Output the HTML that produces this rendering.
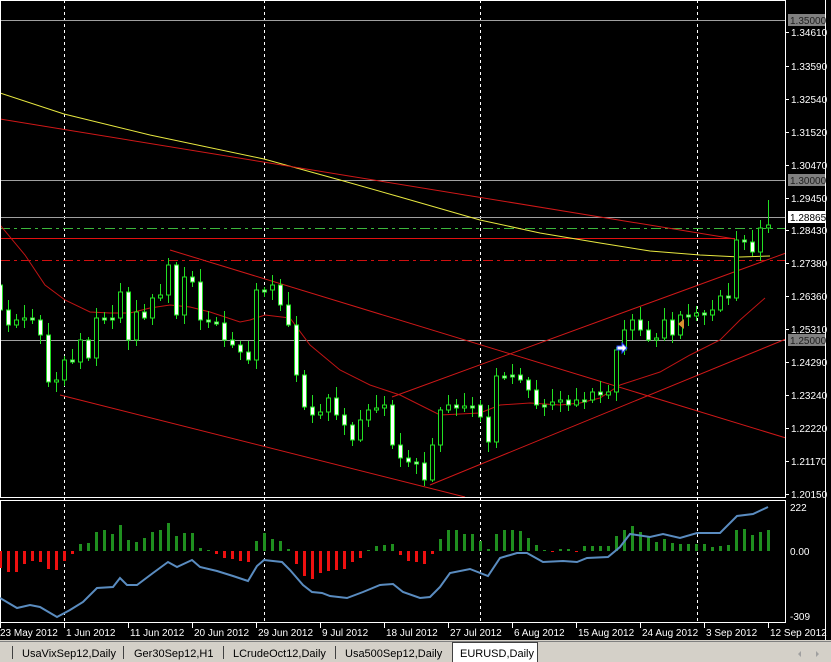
<!DOCTYPE html>
<html><head><meta charset="utf-8"><style>
html,body{margin:0;padding:0;background:#000;width:831px;height:662px;overflow:hidden;font-family:"Liberation Sans",sans-serif;}
svg{display:block}
</style></head><body>
<svg id="s" width="831" height="662" xmlns="http://www.w3.org/2000/svg" font-family="Liberation Sans, sans-serif" font-size="10">
<rect width="831" height="662" fill="#000"/>
<g id="grid"></g>
<line x1="0" y1="20.5" x2="786" y2="20.5" stroke="#a0a0a0"/>
<line x1="0" y1="180.5" x2="786" y2="180.5" stroke="#a0a0a0"/>
<line x1="0" y1="217.5" x2="786" y2="217.5" stroke="#a0a0a0"/>
<line x1="0" y1="340.5" x2="786" y2="340.5" stroke="#a0a0a0"/>
<line x1="0" y1="228.5" x2="786" y2="228.5" stroke="#3cb83c" stroke-dasharray="10,4,3,4"/>
<line x1="0" y1="238.5" x2="735" y2="238.5" stroke="#e01010"/>
<line x1="0" y1="260.5" x2="786" y2="260.5" stroke="#d01010" stroke-dasharray="10,4,3,4"/>
<polyline fill="none" stroke="#e8e840" points="0,93 64,114 150,135 264,159 340,180 400,197 480,220 540,233 600,243 650,251 700,255 740,257 770,256"/>
<line x1="0" y1="119" x2="735" y2="239" stroke="#d01818"/>
<line x1="170" y1="250" x2="786" y2="438" stroke="#d01818"/>
<line x1="60" y1="395" x2="465" y2="497" stroke="#d01818"/>
<line x1="392" y1="397" x2="786" y2="253" stroke="#d01818"/>
<line x1="430" y1="485" x2="786" y2="339" stroke="#d01818"/>
<polyline fill="none" stroke="#c01414" points="0,225 25,255 45,285 65,300 90,312 110,313 130,313 150,308 170,305 190,307 210,312 240,322 250,320 265,315 290,318 310,345 340,370 370,385 400,395 430,410 440,415 460,414 480,413 500,405 530,403 560,405 580,403 600,398 620,385 660,372 690,355 720,340 740,320 765,298"/>
<g id="candles"></g>
<path d="M617,346 l5,0 0,-3 5,5 -5,5 0,-3 -5,0z" fill="#fff" stroke="#2040ff"/>
<path d="M678,324 l6,-5 0,10z" fill="#d89030"/>
<rect x="0.5" y="0.5" width="785" height="497" fill="none" stroke="#fff"/>
<rect x="0.5" y="500.5" width="785" height="122" fill="none" stroke="#fff"/>
<line x1="825.5" y1="0" x2="825.5" y2="641" stroke="#fff"/>
<g id="hist"></g>
<polyline fill="none" stroke="#5a8cc0" stroke-width="2" points="0,598 17,608 30,605 40,607 57,617 70,610 83,602 97,588 113,587 120,578 127,585 137,585 153,573 168,562 177,567 192,560 200,567 217,571 233,576 248,581 257,566 264,560 282,562 290,570 303,585 312,592 322,593 330,596 347,598 363,592 380,585 393,584 403,592 420,598 430,597 440,587 450,573 470,569 488,576 500,558 517,553 527,553 543,562 563,561 577,562 587,558 608,557 620,547 630,534 650,537 663,534 680,538 697,533 720,533 737,516 753,514 768,507"/>
<g id="axis" fill="#fff"></g>
<rect x="788" y="14" width="37" height="12" fill="#808080"/><text x="790" y="24" fill="#202020">1.35000</text>
<rect x="788" y="174" width="37" height="12" fill="#808080"/><text x="790" y="184" fill="#202020">1.30000</text>
<rect x="788" y="211" width="37" height="12" fill="#fff"/><text x="790" y="221" fill="#000">1.28865</text>
<rect x="788" y="334" width="37" height="12" fill="#808080"/><text x="790" y="344" fill="#202020">1.25000</text>
<text x="790" y="511" fill="#fff">222</text>
<text x="790" y="555" fill="#fff">0.00</text>
<text x="790" y="620" fill="#fff">-309</text>
<rect x="0" y="640" width="831" height="22" fill="#d4d0c8"/>
<line x1="0" y1="641.5" x2="831" y2="641.5" stroke="#808080"/>
<g stroke="#404040"><line x1="12.5" y1="646" x2="12.5" y2="659"/><line x1="123.5" y1="646" x2="123.5" y2="659"/><line x1="223.5" y1="646" x2="223.5" y2="659"/><line x1="335.5" y1="646" x2="335.5" y2="659"/></g>
<rect x="452.5" y="642.5" width="85" height="20" fill="#fff" stroke="#404040"/>
<g font-size="11" fill="#000"><text x="22" y="657">UsaVixSep12,Daily</text><text x="134" y="657">Ger30Sep12,H1</text><text x="233" y="657">LCrudeOct12,Daily</text><text x="345" y="657">Usa500Sep12,Daily</text><text x="460" y="657">EURUSD,Daily</text></g>
<path d="M801,651 l-3,3 3,3z M816,651 l3,3 -3,3z" fill="#a0a0a0"/>
</svg>
<script>
(function(){
var NS="http://www.w3.org/2000/svg";
function el(p,t,a){var e=document.createElementNS(NS,t);for(var k in a)e.setAttribute(k,a[k]);document.getElementById(p).appendChild(e);return e;}
[64,264,480,697].forEach(function(x){el("grid","line",{x1:x+.5,y1:0,x2:x+.5,y2:623,stroke:"#fff","stroke-dasharray":"3,3"});});
var C=[310,325,320,318,320,335,382,380,360,362,340,358,318,318,318,292,340,312,318,298,295,265,315,277,282,320,322,323,340,345,352,360,290,290,285,305,325,375,407,415,412,398,415,425,440,420,410,408,405,445,458,462,463,480,445,410,405,408,406,405,417,442,376,375,375,380,390,405,405,402,400,405,400,400,392,395,392,350,330,320,330,340,338,320,335,315,316,313,315,310,296,298,240,242,252,228,225];
var prev=285;
for(var i=0;i<C.length;i++){
 var o=prev,c=C[i],x=8*i;
 if(Math.abs(o-c)<2){c=o+2;}
 var bt=Math.min(o,c),bb=Math.max(o,c);
 var hi=bt-(3+(i*7)%11),lo=bb+(2+(i*5)%9);
 if(i==96)hi=200;
 el("candles","line",{x1:x+.5,y1:hi,x2:x+.5,y2:lo,stroke:"#22e022"});
 var bull=c<o;
 el("candles","rect",{x:x-1.5,y:bt,width:4,height:bb-bt,fill:bull?"#000":"#fff",stroke:"#22e022"});
 prev=C[i];
}
var H=[-17,-21,-21,-13,-10,-11,-18,-19,-10,-3,7,8,19,21,17,26,11,9,13,19,21,28,15,18,18,3,1,-3,-7,-8,-10,-11,10,18,12,10,2,-13,-25,-28,-22,-20,-19,-18,-11,-7,1,5,6,7,-4,-10,-11,-13,-3,12,21,21,17,17,10,2,17,21,21,20,13,6,1,-1,2,2,-1,5,5,5,5,15,21,25,19,15,9,12,8,7,7,7,7,4,5,6,21,22,16,19,21];
for(var j=0;j<H.length;j++){var h=H[j],hx=8*j-1;
 if(h>=0)el("hist","rect",{x:hx,y:551-h,width:3,height:Math.max(h,1),fill:"#1f8f1f"});
 else el("hist","rect",{x:hx,y:551,width:3,height:-h,fill:"#ee1010"});}
var P=[["1.34610",32],["1.33590",66],["1.32540",99],["1.31520",132],["1.30470",165],["1.29450",198],["1.28430",230],["1.27380",263],["1.26360",296],["1.25310",329],["1.24290",362],["1.23240",395],["1.22220",428],["1.21170",461],["1.20150",494]];
P.forEach(function(p){el("axis","line",{x1:786,y1:p[1]+.5,x2:789,y2:p[1]+.5,stroke:"#fff"});var t=el("axis","text",{x:791,y:p[1]+4});t.textContent=p[0];});
var D=[["23 May 2012",0],["1 Jun 2012",64],["11 Jun 2012",128],["20 Jun 2012",192],["29 Jun 2012",256],["9 Jul 2012",320],["18 Jul 2012",384],["27 Jul 2012",448],["6 Aug 2012",512],["15 Aug 2012",576],["24 Aug 2012",640],["3 Sep 2012",704],["12 Sep 2012",768]];
D.forEach(function(d){el("axis","line",{x1:d[1]+.5,y1:623,x2:d[1]+.5,y2:628,stroke:"#fff"});var t=el("axis","text",{x:d[1]?d[1]+2:0,y:636});t.textContent=d[0];});
})();
</script>
</body></html>
